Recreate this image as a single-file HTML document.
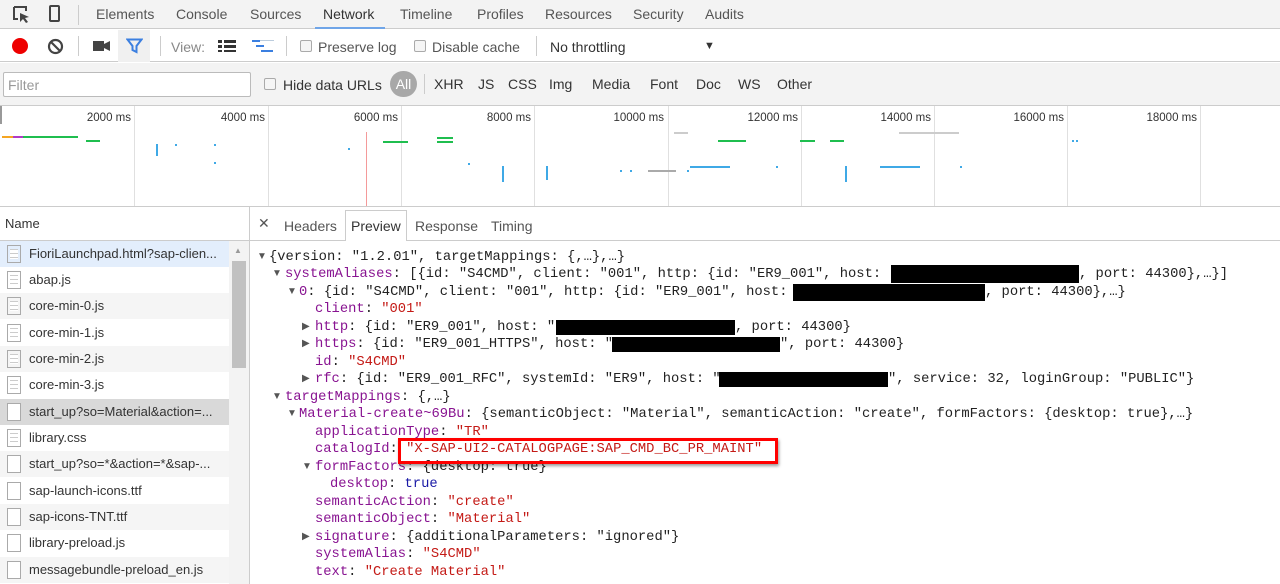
<!DOCTYPE html>
<html><head><meta charset="utf-8"><style>
*{margin:0;padding:0;box-sizing:border-box}
body{width:1280px;height:584px;overflow:hidden;background:#fff;font-family:"Liberation Sans",sans-serif;color:#333;position:relative}
.a{position:absolute;white-space:nowrap}
.ui{font-size:14px;color:#555}
.code{font-family:"Liberation Mono",monospace;font-size:13.8px;color:#222;position:absolute;white-space:nowrap;line-height:17px}
.k{color:#881391}.s{color:#c41a16}.b{color:#1a1aa6}
.tri{font-size:10px;color:#555;position:absolute}
.blk{position:absolute;background:#000}
.row{position:absolute;left:0;width:230px;height:26px;font-size:13px;color:#333}
.row span{position:absolute;left:29px;top:5px}
.ic{position:absolute;left:7px;top:4px;width:14px;height:18px;border:1px solid #aaa;background:#fff}
.ic.d{background:repeating-linear-gradient(#fff 0 3px,#ccc 3px 4px);background-clip:content-box;padding:3px 2px}
.g{position:absolute;top:106px;width:1px;height:100px;background:#e0e0e0}
.lb{position:absolute;top:112px;font-size:11.5px;color:#333;text-align:right;width:80px}
.dot{position:absolute;background:#3fa9e6;width:2px;height:2px}
</style></head><body>
<div class="a" style="left:0;top:0;width:1280px;height:29px;background:#f3f3f3;border-bottom:1px solid #ccc"></div>
<svg class="a" style="left:12px;top:5px" width="20" height="20" viewBox="0 0 20 20"><path d="M2 2h12v4M2 2v12h4" fill="none" stroke="#444" stroke-width="2"/><path d="M8 8l9 4-4 1 3 4-2 1-3-4-3 3z" fill="#444"/></svg>
<div class="a" style="left:49px;top:5px;width:11px;height:17px;border:2px solid #444;border-radius:2px"></div>
<div class="a" style="left:78px;top:5px;width:1px;height:20px;background:#ccc"></div>
<div class="a ui" style="left:96px;top:6px">Elements</div>
<div class="a ui" style="left:176px;top:6px">Console</div>
<div class="a ui" style="left:250px;top:6px">Sources</div>
<div class="a ui" style="left:323px;top:6px;color:#333">Network</div>
<div class="a" style="left:315px;top:27px;width:70px;height:2px;background:#6fa5e8"></div>
<div class="a ui" style="left:400px;top:6px">Timeline</div>
<div class="a ui" style="left:477px;top:6px">Profiles</div>
<div class="a ui" style="left:545px;top:6px">Resources</div>
<div class="a ui" style="left:633px;top:6px">Security</div>
<div class="a ui" style="left:705px;top:6px">Audits</div>
<div class="a" style="left:0;top:30px;width:1280px;height:32px;background:#fff;border-bottom:1px solid #ccc"></div>
<div class="a" style="left:12px;top:38px;width:16px;height:16px;border-radius:50%;background:#e00"></div>
<svg class="a" style="left:47px;top:38px" width="17" height="17"><circle cx="8.5" cy="8.5" r="6.5" fill="none" stroke="#444" stroke-width="2.2"/><path d="M4 4l9 9" stroke="#444" stroke-width="2.2"/></svg>
<div class="a" style="left:78px;top:36px;width:1px;height:20px;background:#ccc"></div>
<svg class="a" style="left:93px;top:41px" width="17" height="10"><rect x="0" y="0" width="11" height="10" fill="#444"/><path d="M11 3l6-3v10l-6-3z" fill="#444"/></svg>
<div class="a" style="left:118px;top:30px;width:32px;height:32px;background:#f0f0f0"></div>
<svg class="a" style="left:126px;top:38px" width="17" height="16"><path d="M1.5 1.5h14l-5 6.5v6l-4-2v-4z" fill="none" stroke="#3b7fe0" stroke-width="2"/></svg>
<div class="a" style="left:160px;top:36px;width:1px;height:20px;background:#ccc"></div>
<div class="a ui" style="left:171px;top:39px;color:#888">View:</div>
<svg class="a" style="left:218px;top:40px" width="18" height="12"><rect x="0" y="0" width="4" height="3" fill="#333"/><rect x="6" y="0" width="12" height="3" fill="#333"/><rect x="0" y="5" width="4" height="3" fill="#333"/><rect x="6" y="5" width="12" height="3" fill="#333"/><rect x="0" y="10" width="4" height="2" fill="#333"/><rect x="6" y="10" width="12" height="2" fill="#333"/></svg>
<svg class="a" style="left:252px;top:40px" width="22" height="14"><rect x="0" y="0" width="8" height="2" fill="#3b7fe0"/><rect x="8" y="0" width="14" height="1" fill="#bcd"/><rect x="4" y="5" width="8" height="2" fill="#3b7fe0"/><rect x="9" y="10" width="12" height="2" fill="#3b7fe0"/></svg>
<div class="a" style="left:286px;top:36px;width:1px;height:20px;background:#ccc"></div>
<div class="a" style="left:300px;top:40px;width:12px;height:12px;border:1px solid #aaa;border-radius:2px;background:#f5f5f5"></div>
<div class="a ui" style="left:318px;top:39px">Preserve log</div>
<div class="a" style="left:414px;top:40px;width:12px;height:12px;border:1px solid #aaa;border-radius:2px;background:#f5f5f5"></div>
<div class="a ui" style="left:432px;top:39px">Disable cache</div>
<div class="a" style="left:536px;top:36px;width:1px;height:20px;background:#ccc"></div>
<div class="a ui" style="left:550px;top:39px;color:#333">No throttling</div>
<div class="a" style="left:704px;top:40px;font-size:11px;color:#333">▼</div>
<div class="a" style="left:0;top:63px;width:1280px;height:43px;background:#f3f3f3;border-bottom:1px solid #ccc"></div>
<div class="a" style="left:3px;top:72px;width:248px;height:25px;background:#fff;border:1px solid #bbb;border-radius:2px"></div>
<div class="a" style="left:8px;top:77px;font-size:14px;color:#999">Filter</div>
<div class="a" style="left:264px;top:78px;width:12px;height:12px;border:1px solid #aaa;border-radius:2px;background:#f5f5f5"></div>
<div class="a" style="left:283px;top:77px;font-size:14px;color:#333">Hide data URLs</div>
<div class="a" style="left:390px;top:71px;width:27px;height:26px;border-radius:13px;background:#a8a8a8;color:#fff;font-size:14px;text-align:center;line-height:26px">All</div>
<div class="a" style="left:424px;top:74px;width:1px;height:20px;background:#ccc"></div>
<div class="a" style="left:434px;top:76px;font-size:14px;color:#333">XHR</div>
<div class="a" style="left:478px;top:76px;font-size:14px;color:#333">JS</div>
<div class="a" style="left:508px;top:76px;font-size:14px;color:#333">CSS</div>
<div class="a" style="left:549px;top:76px;font-size:14px;color:#333">Img</div>
<div class="a" style="left:592px;top:76px;font-size:14px;color:#333">Media</div>
<div class="a" style="left:650px;top:76px;font-size:14px;color:#333">Font</div>
<div class="a" style="left:696px;top:76px;font-size:14px;color:#333">Doc</div>
<div class="a" style="left:738px;top:76px;font-size:14px;color:#333">WS</div>
<div class="a" style="left:777px;top:76px;font-size:14px;color:#333">Other</div>
<div class="a" style="left:0;top:206px;width:1280px;height:1px;background:#ccc"></div>
<div class="g" style="left:134px"></div><div class="g" style="left:268px"></div><div class="g" style="left:401px"></div><div class="g" style="left:534px"></div><div class="g" style="left:668px"></div><div class="g" style="left:801px"></div><div class="g" style="left:934px"></div><div class="g" style="left:1067px"></div><div class="g" style="left:1200px"></div>
<div class="lb" style="left:51px">2000 ms</div><div class="lb" style="left:185px">4000 ms</div><div class="lb" style="left:318px">6000 ms</div><div class="lb" style="left:451px">8000 ms</div><div class="lb" style="left:584px">10000 ms</div><div class="lb" style="left:718px">12000 ms</div><div class="lb" style="left:851px">14000 ms</div><div class="lb" style="left:984px">16000 ms</div><div class="lb" style="left:1117px">18000 ms</div>
<div class="a" style="left:0;top:106px;width:2px;height:18px;background:#999"></div>
<div class="a" style="left:2px;top:136px;width:11px;height:2px;background:#f5a623"></div>
<div class="a" style="left:13px;top:136px;width:10px;height:2px;background:#b03bc6"></div>
<div class="a" style="left:23px;top:136px;width:55px;height:2px;background:#1fbe4f"></div>
<div class="a" style="left:86px;top:140px;width:14px;height:2px;background:#1fbe4f"></div>
<div class="a" style="left:366px;top:132px;width:1px;height:74px;background:#f49a9a"></div>
<div class="a" style="left:383px;top:141px;width:25px;height:2px;background:#1fbe4f"></div>
<div class="a" style="left:437px;top:137px;width:16px;height:2px;background:#1fbe4f"></div>
<div class="a" style="left:437px;top:141px;width:16px;height:2px;background:#1fbe4f"></div>
<div class="a" style="left:718px;top:140px;width:28px;height:2px;background:#1fbe4f"></div>
<div class="a" style="left:800px;top:140px;width:15px;height:2px;background:#1fbe4f"></div>
<div class="a" style="left:830px;top:140px;width:14px;height:2px;background:#1fbe4f"></div>
<div class="a" style="left:899px;top:132px;width:60px;height:2px;background:#ccc"></div>
<div class="a" style="left:648px;top:170px;width:28px;height:2px;background:#aaa"></div>
<div class="a" style="left:674px;top:132px;width:14px;height:2px;background:#ccc"></div>
<div class="dot" style="left:156px;top:144px;height:12px"></div><div class="dot" style="left:175px;top:144px"></div><div class="dot" style="left:214px;top:144px"></div><div class="dot" style="left:214px;top:162px"></div><div class="dot" style="left:348px;top:148px"></div><div class="dot" style="left:468px;top:163px"></div><div class="dot" style="left:502px;top:166px;height:16px"></div><div class="dot" style="left:546px;top:166px;height:14px"></div><div class="dot" style="left:620px;top:170px"></div><div class="dot" style="left:630px;top:170px"></div><div class="dot" style="left:687px;top:170px"></div><div class="dot" style="left:690px;top:166px;width:40px"></div><div class="dot" style="left:776px;top:166px"></div><div class="dot" style="left:845px;top:166px;height:16px"></div><div class="dot" style="left:880px;top:166px;width:40px"></div><div class="dot" style="left:960px;top:166px"></div><div class="dot" style="left:1072px;top:140px"></div><div class="dot" style="left:1076px;top:140px"></div>
<div class="a" style="left:0;top:240px;width:1280px;height:1px;background:#ccc"></div>
<div class="a" style="left:249px;top:207px;width:1px;height:377px;background:#ccc"></div>
<div class="a" style="left:5px;top:216px;font-size:13px;color:#333">Name</div>
<div class="a" style="left:258px;top:215px;font-size:14px;color:#555">✕</div>
<div class="a ui" style="left:284px;top:218px">Headers</div>
<div class="a" style="left:345px;top:210px;width:62px;height:31px;border:1px solid #ccc;border-bottom:none;background:#fff"></div>
<div class="a ui" style="left:351px;top:218px;color:#333">Preview</div>
<div class="a ui" style="left:415px;top:218px">Response</div>
<div class="a ui" style="left:491px;top:218px">Timing</div>
<div class="row" style="top:241px;background:#e3eefc"><div class="ic d"></div><span>FioriLaunchpad.html?sap-clien...</span></div>
<div class="row" style="top:267px"><div class="ic d"></div><span>abap.js</span></div>
<div class="row" style="top:293px;background:#f5f5f5"><div class="ic d"></div><span>core-min-0.js</span></div>
<div class="row" style="top:320px"><div class="ic d"></div><span>core-min-1.js</span></div>
<div class="row" style="top:346px;background:#f5f5f5"><div class="ic d"></div><span>core-min-2.js</span></div>
<div class="row" style="top:372px"><div class="ic d"></div><span>core-min-3.js</span></div>
<div class="row" style="top:399px;background:#d9d9d9"><div class="ic"></div><span>start_up?so=Material&amp;action=...</span></div>
<div class="row" style="top:425px"><div class="ic d"></div><span>library.css</span></div>
<div class="row" style="top:451px;background:#f5f5f5"><div class="ic"></div><span>start_up?so=*&amp;action=*&amp;sap-...</span></div>
<div class="row" style="top:478px"><div class="ic"></div><span>sap-launch-icons.ttf</span></div>
<div class="row" style="top:504px;background:#f5f5f5"><div class="ic"></div><span>sap-icons-TNT.ttf</span></div>
<div class="row" style="top:530px"><div class="ic"></div><span>library-preload.js</span></div>
<div class="row" style="top:557px;background:#f5f5f5"><div class="ic"></div><span>messagebundle-preload_en.js</span></div>
<div class="a" style="left:229px;top:241px;width:20px;height:343px;background:#f3f3f3"></div>
<div class="a" style="left:234px;top:246px;font-size:8px;color:#999">▲</div>
<div class="a" style="left:232px;top:261px;width:14px;height:107px;background:#c1c1c1"></div>
<div class="tri" style="left:257px;top:251px">▼</div>
<div class="code" style="left:269px;top:249px">{version: "1.2.01", targetMappings: {,…},…}</div>
<div class="tri" style="left:272px;top:268px">▼</div>
<div class="code" style="left:285px;top:266px"><span class="k">systemAliases</span>: [{id: "S4CMD", client: "001", http: {id: "ER9_001", host: "</div>
<div class="code" style="left:1079px;top:266px">, port: 44300},…}]</div>
<div class="tri" style="left:287px;top:286px">▼</div>
<div class="code" style="left:299px;top:284px"><span class="k">0</span>: {id: "S4CMD", client: "001", http: {id: "ER9_001", host:</div>
<div class="code" style="left:985px;top:284px">, port: 44300},…}</div>
<div class="code" style="left:315px;top:301px"><span class="k">client</span>: <span class="s">"001"</span></div>
<div class="tri" style="left:302px;top:321px">▶</div>
<div class="code" style="left:315px;top:319px"><span class="k">http</span>: {id: "ER9_001", host: "</div>
<div class="code" style="left:735px;top:319px">, port: 44300}</div>
<div class="tri" style="left:302px;top:338px">▶</div>
<div class="code" style="left:315px;top:336px"><span class="k">https</span>: {id: "ER9_001_HTTPS", host: "</div>
<div class="code" style="left:780px;top:336px">", port: 44300}</div>
<div class="code" style="left:315px;top:354px"><span class="k">id</span>: <span class="s">"S4CMD"</span></div>
<div class="tri" style="left:302px;top:373px">▶</div>
<div class="code" style="left:315px;top:371px"><span class="k">rfc</span>: {id: "ER9_001_RFC", systemId: "ER9", host: "</div>
<div class="code" style="left:888px;top:371px">", service: 32, loginGroup: "PUBLIC"}</div>
<div class="tri" style="left:272px;top:391px">▼</div>
<div class="code" style="left:285px;top:389px"><span class="k">targetMappings</span>: {,…}</div>
<div class="tri" style="left:287px;top:408px">▼</div>
<div class="code" style="left:299px;top:406px"><span class="k">Material-create~69Bu</span>: {semanticObject: "Material", semanticAction: "create", formFactors: {desktop: true},…}</div>
<div class="code" style="left:315px;top:424px"><span class="k">applicationType</span>: <span class="s">"TR"</span></div>
<div class="code" style="left:315px;top:441px"><span class="k">catalogId</span>: <span class="s">"X-SAP-UI2-CATALOGPAGE:SAP_CMD_BC_PR_MAINT"</span></div>
<div class="tri" style="left:302px;top:461px">▼</div>
<div class="code" style="left:315px;top:459px"><span class="k">formFactors</span>: {desktop: true}</div>
<div class="code" style="left:330px;top:476px"><span class="k">desktop</span>: <span class="b">true</span></div>
<div class="code" style="left:315px;top:494px"><span class="k">semanticAction</span>: <span class="s">"create"</span></div>
<div class="code" style="left:315px;top:511px"><span class="k">semanticObject</span>: <span class="s">"Material"</span></div>
<div class="tri" style="left:302px;top:531px">▶</div>
<div class="code" style="left:315px;top:529px"><span class="k">signature</span>: {additionalParameters: "ignored"}</div>
<div class="code" style="left:315px;top:546px"><span class="k">systemAlias</span>: <span class="s">"S4CMD"</span></div>
<div class="code" style="left:315px;top:564px"><span class="k">text</span>: <span class="s">"Create Material"</span></div>
<div class="blk" style="left:891px;top:265px;width:188px;height:18px"></div>
<div class="blk" style="left:793px;top:284px;width:192px;height:17px"></div>
<div class="blk" style="left:556px;top:320px;width:179px;height:15px"></div>
<div class="blk" style="left:612px;top:337px;width:168px;height:15px"></div>
<div class="blk" style="left:719px;top:372px;width:169px;height:15px"></div>
<div class="a" style="left:398px;top:438px;width:380px;height:26px;border:3px solid #f00;box-shadow:1px 2px 3px rgba(0,0,0,.4)"></div>
</body></html>
